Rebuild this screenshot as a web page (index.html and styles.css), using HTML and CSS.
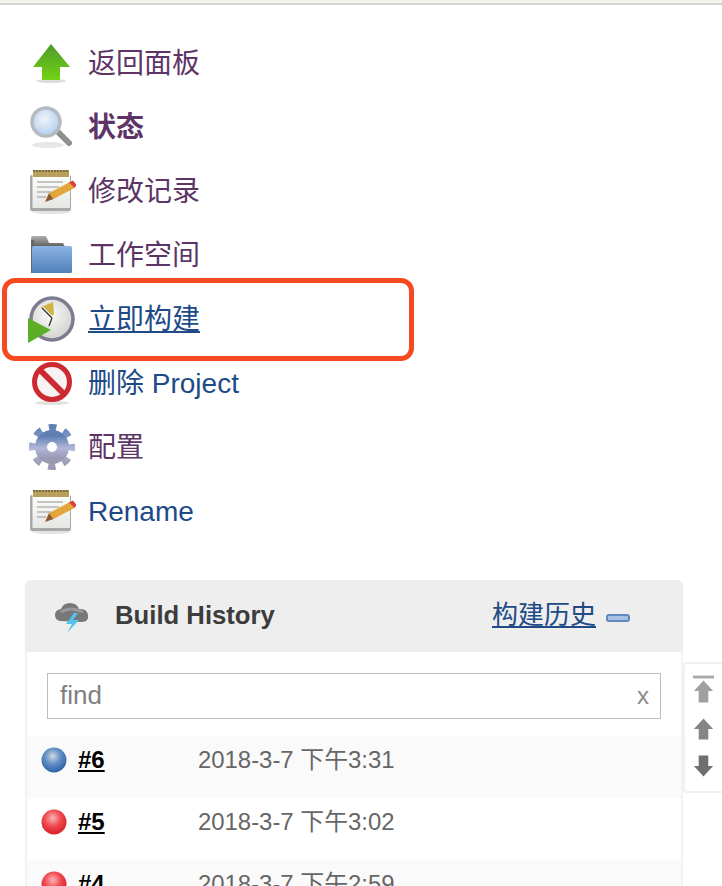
FILE: index.html
```html
<!DOCTYPE html>
<html lang="zh">
<head>
<meta charset="utf-8">
<title>Jenkins Project</title>
<link rel="stylesheet" href="styles.css">
</head>
<body>
<svg class="defs" width="0" height="0" aria-hidden="true">
  <defs>
    <linearGradient id="gArrow" x1="0" y1="0" x2="0" y2="1"><stop offset="0" stop-color="#4e9a2a"/><stop offset="1" stop-color="#73d216"/></linearGradient>
    <linearGradient id="gPaper" x1="0" y1="0" x2="0" y2="1"><stop offset="0" stop-color="#fdfdfd"/><stop offset="1" stop-color="#e6e6e3"/></linearGradient>
    <linearGradient id="gFolder" x1="0" y1="0" x2="0" y2="1"><stop offset="0" stop-color="#8db3e4"/><stop offset="1" stop-color="#4f7fb8"/></linearGradient>
    <linearGradient id="gTab" x1="0" y1="0" x2="0" y2="1"><stop offset="0" stop-color="#b0b0b0"/><stop offset="1" stop-color="#5c5c5c"/></linearGradient>
    <radialGradient id="gLens" cx=".45" cy=".4" r=".6"><stop offset="0" stop-color="#eef4fb"/><stop offset="1" stop-color="#b4cfee"/></radialGradient>
    <radialGradient id="gClock" cx=".45" cy=".4" r=".6"><stop offset="0" stop-color="#fafafa"/><stop offset="1" stop-color="#d2d2ce"/></radialGradient>
    <linearGradient id="gGear" x1="0" y1="0" x2="0" y2="1"><stop offset="0" stop-color="#5f7fb4"/><stop offset=".55" stop-color="#b2b6d8"/><stop offset="1" stop-color="#9a9ab4"/></linearGradient>
    <radialGradient id="gBlue" cx=".45" cy=".35" r=".65"><stop offset="0" stop-color="#cfdbe2"/><stop offset=".5" stop-color="#5f8dc4"/><stop offset="1" stop-color="#2f62a5"/></radialGradient>
    <radialGradient id="gRed" cx=".45" cy=".35" r=".65"><stop offset="0" stop-color="#fbb4b8"/><stop offset=".5" stop-color="#f04a50"/><stop offset="1" stop-color="#d81e26"/></radialGradient>
    <symbol id="note" viewBox="0 0 48 48">
      <ellipse cx="23" cy="46" rx="19" ry="2" fill="#e4e4e4"/>
      <rect x="2" y="9" width="41" height="36" rx="2" fill="#a8a8a4"/>
      <rect x="4.500" y="9" width="37.500" height="33" fill="url(#gPaper)"/>
      <rect x="5" y="4" width="36" height="7" fill="#b8a05c"/>
      <path d="M5 5h36" stroke="#7d6c3a" stroke-width="2" stroke-dasharray="2 1"/>
      <path d="M9 16h26M9 21h22M9 26h14M9 31h9" stroke="#b4b4b0" stroke-width="1.500"/>
      <path d="M21 27L42 16l4.500 6-21 11z" fill="#e3a63a"/>
      <path d="M17 36l4-9 4.500 6z" fill="#8a5a2a"/>
      <path d="M41 16.500l4-2 3.500 4.500-2 3z" fill="#dc3f38"/>
    </symbol>
  </defs>
</svg>

<div class="topbar"></div>

<ul class="tasks">
  <li class="task">
    <svg class="task-icon" viewBox="0 0 48 48"><ellipse cx="23" cy="43" rx="15" ry="2" fill="#ddd"/><path d="M23 6L42 29H32V42H14V29H5z" fill="url(#gArrow)"/></svg>
    <a class="link visited" href="#">返回面板</a>
  </li>
  <li class="task">
    <svg class="task-icon" viewBox="0 0 48 48"><ellipse cx="20" cy="43" rx="16" ry="3" fill="#e6e6e6"/><path d="M31 31L41 41" stroke="#8f8f8b" stroke-width="6" stroke-linecap="round"/><circle cx="18" cy="20" r="14" fill="url(#gLens)" stroke="#b6bac1" stroke-width="3.500"/></svg>
    <a class="link visited strong" href="#">状态</a>
  </li>
  <li class="task">
    <svg class="task-icon"><use href="#note"/></svg>
    <a class="link visited" href="#">修改记录</a>
  </li>
  <li class="task">
    <svg class="task-icon" viewBox="0 0 48 48"><path d="M3 8q0-2 2-2h13l3 7h14l2 4H4z" fill="url(#gTab)"/><rect x="3" y="10" width="3" height="33" fill="#666"/><rect x="4" y="16" width="40" height="27" rx="1.500" fill="url(#gFolder)"/></svg>
    <a class="link visited" href="#">工作空间</a>
  </li>
  <li class="task">
    <svg class="task-icon" viewBox="0 0 48 48"><circle cx="24" cy="25" r="21" fill="url(#gClock)" stroke="#7f7c90" stroke-width="3.500"/><path d="M13 13l12-5 1 12-4 4z" fill="#d2b446"/><path d="M14 14L24 24M24 24l-3 8" stroke="#fff" stroke-width="3.500"/><path d="M14 14L24 24M24 24l-3 8" stroke="#44423e" stroke-width="1.600"/><path d="M0 24L23 36 0 49z" fill="#5cae26"/></svg>
    <a class="link current" href="#">立即构建</a>
  </li>
  <li class="task">
    <svg class="task-icon" viewBox="0 0 48 48"><ellipse cx="24" cy="45" rx="17" ry="2" fill="#e2e2e2"/><circle cx="24" cy="24" r="17.500" fill="#f8f2f2" stroke="#cc2a30" stroke-width="5"/><path d="M12 12L36 36" stroke="#cc2a30" stroke-width="6"/></svg>
    <a class="link" href="#">删除 Project</a>
  </li>
  <li class="task">
    <svg class="task-icon" viewBox="0 0 48 48"><circle cx="24" cy="25" r="19.500" fill="none" stroke="url(#gGear)" stroke-width="7" stroke-dasharray="7.500 7.810" stroke-dashoffset="-26.900"/><circle cx="24" cy="25" r="11" fill="none" stroke="url(#gGear)" stroke-width="12"/></svg>
    <a class="link visited" href="#">配置</a>
  </li>
  <li class="task">
    <svg class="task-icon"><use href="#note"/></svg>
    <a class="link" href="#">Rename</a>
  </li>
</ul>

<section class="panel">
  <header class="panel-head">
    <svg class="cloud" viewBox="0 0 36 36"><path d="M6 23q-5-1-5-6t6-6q2-6 9-6t9 6q8-1 9 6t-6 7z" fill="#77787a"/><path d="M7 14q10-6 22 0" stroke="#98999b" stroke-width="3" fill="none"/><path d="M20 15l-8 11h6l-5 9 12-13h-6l5-7z" fill="#55c3ee"/></svg>
    <h2 class="panel-title">Build History</h2>
    <a class="panel-link" href="#">构建历史</a>
    <span class="minus"></span>
  </header>
  <div class="search-wrap">
    <div class="search">
      <span class="search-text">find</span>
      <span class="search-x">x</span>
    </div>
  </div>
  <div class="build odd">
    <svg class="ball" viewBox="0 0 26 26"><circle cx="13" cy="13" r="12.500" fill="url(#gBlue)"/></svg>
    <a class="build-no" href="#">#6</a>
    <span class="build-date">2018-3-7 下午3:31</span>
  </div>
  <div class="build">
    <svg class="ball" viewBox="0 0 26 26"><circle cx="13" cy="13" r="12.500" fill="url(#gRed)"/></svg>
    <a class="build-no" href="#">#5</a>
    <span class="build-date">2018-3-7 下午3:02</span>
  </div>
  <div class="build odd">
    <svg class="ball" viewBox="0 0 26 26"><circle cx="13" cy="13" r="12.500" fill="url(#gRed)"/></svg>
    <a class="build-no" href="#">#4</a>
    <span class="build-date">2018-3-7 下午2:59</span>
  </div>
</section>

<div class="scroller">
  <svg class="scroll-icon tall" viewBox="0 0 24 30"><path d="M1 1h22v3H1z" fill="#a8a8a8"/><path d="M12 6l10 11h-5v12H7V17H2z" fill="#a0a0a0"/></svg>
  <svg class="scroll-icon" viewBox="0 0 24 24"><path d="M12 1l10 11h-5v11H7V12H2z" fill="#858585"/></svg>
  <svg class="scroll-icon" viewBox="0 0 24 24"><path d="M12 23l10-11h-5V1H7v11H2z" fill="#6f6f6f"/></svg>
</div>

<div class="highlight"></div>
</body>
</html>
```
FILE: styles.css
```css
* { box-sizing: border-box; }

html, body {
  margin: 0;
  padding: 0;
  height: 886px;
  overflow: hidden;
  background: #fff;
  font-family: "Liberation Sans", "Noto Sans CJK SC", sans-serif;
}

.defs { position: absolute; }

.topbar {
  height: 5px;
  background: #f3f3ee;
  border-bottom: 2px solid #d5d5cc;
}

.tasks {
  list-style: none;
  margin: 0;
  padding: 25px 0 0 28px;
}

.task {
  display: flex;
  align-items: center;
  gap: 12px;
  height: 64px;
}

.task-icon {
  width: 48px;
  height: 48px;
  flex: none;
  overflow: visible;
  filter: blur(.7px);
}

.link {
  font-size: 28px;
  line-height: 32px;
  margin-top: 4px;
  color: #204a87;
  text-decoration: none;
}
.link.visited { color: #5c3566; }
.link.strong { font-weight: bold; }
.link.current { text-decoration: underline; }

.panel {
  margin: 38px 39px 0 25px;
  border-left: 2px solid #f2f2f2;
  border-right: 2px solid #f2f2f2;
  border-radius: 6px 6px 0 0;
}

.panel-head {
  display: flex;
  align-items: center;
  height: 72px;
  margin: 0 -2px;
  padding: 0 53px 0 29px;
  background: #eeeeee;
  border-radius: 6px 6px 0 0;
}

.cloud {
  width: 36px;
  height: 36px;
  margin-right: 25px;
  flex: none;
  filter: blur(.7px);
}

.panel-title {
  margin: 0 0 2px;
  flex: 1;
  font-size: 25.7px;
  font-weight: bold;
  color: #3c3c3c;
}

.panel-link {
  font-size: 26px;
  line-height: 30px;
  margin-bottom: 2px;
  color: #204a87;
  text-decoration: underline;
}

.minus {
  width: 24px;
  height: 8px;
  margin-left: 10px;
  margin-top: 4px;
  background: #a9c2e3;
  border: 2px solid #5f8ac0;
  border-radius: 3px;
}

.search-wrap { padding: 21px 20px 17px; }

.search {
  display: flex;
  justify-content: space-between;
  align-items: center;
  height: 46px;
  padding: 0 10px 2px 12px;
  border: 1px solid #bdbdbd;
}

.search-text { font-size: 26px; color: #808080; }
.search-x { font-size: 24px; color: #8a8a8a; margin-top: 2px; margin-right: 1px; }

.build {
  display: flex;
  align-items: flex-start;
  height: 62px;
  padding: 11px 0 0 14px;
  background: #fff;
}
.build.odd { background: #fafafa; }

.ball {
  width: 26px;
  height: 26px;
  margin-right: 11px;
  flex: none;
  filter: blur(.6px);
}

.build-no {
  width: 120px;
  margin-top: -1px;
  font-size: 24px;
  line-height: 27px;
  font-weight: bold;
  color: #000;
  text-decoration: underline;
}

.build-date {
  margin-top: -1px;
  font-size: 23.9px;
  line-height: 27px;
  color: #666;
}

.scroller {
  position: absolute;
  left: 683px;
  top: 662px;
  width: 39px;
  height: 131px;
  padding: 10px 6px 0 7px;
  background: #fff;
  border: 2px solid #f0f0f0;
  border-right: 0;
  border-radius: 4px 0 0 4px;
}

.scroll-icon {
  display: block;
  width: 23px;
  height: 24px;
  margin-top: 13px;
  filter: blur(.6px);
}
.scroll-icon.tall { height: 30px; margin-top: 0; }

.highlight {
  position: absolute;
  left: 2px;
  top: 278px;
  width: 412px;
  height: 83px;
  border: 5px solid #f5491f;
  border-radius: 13px;
}
```
